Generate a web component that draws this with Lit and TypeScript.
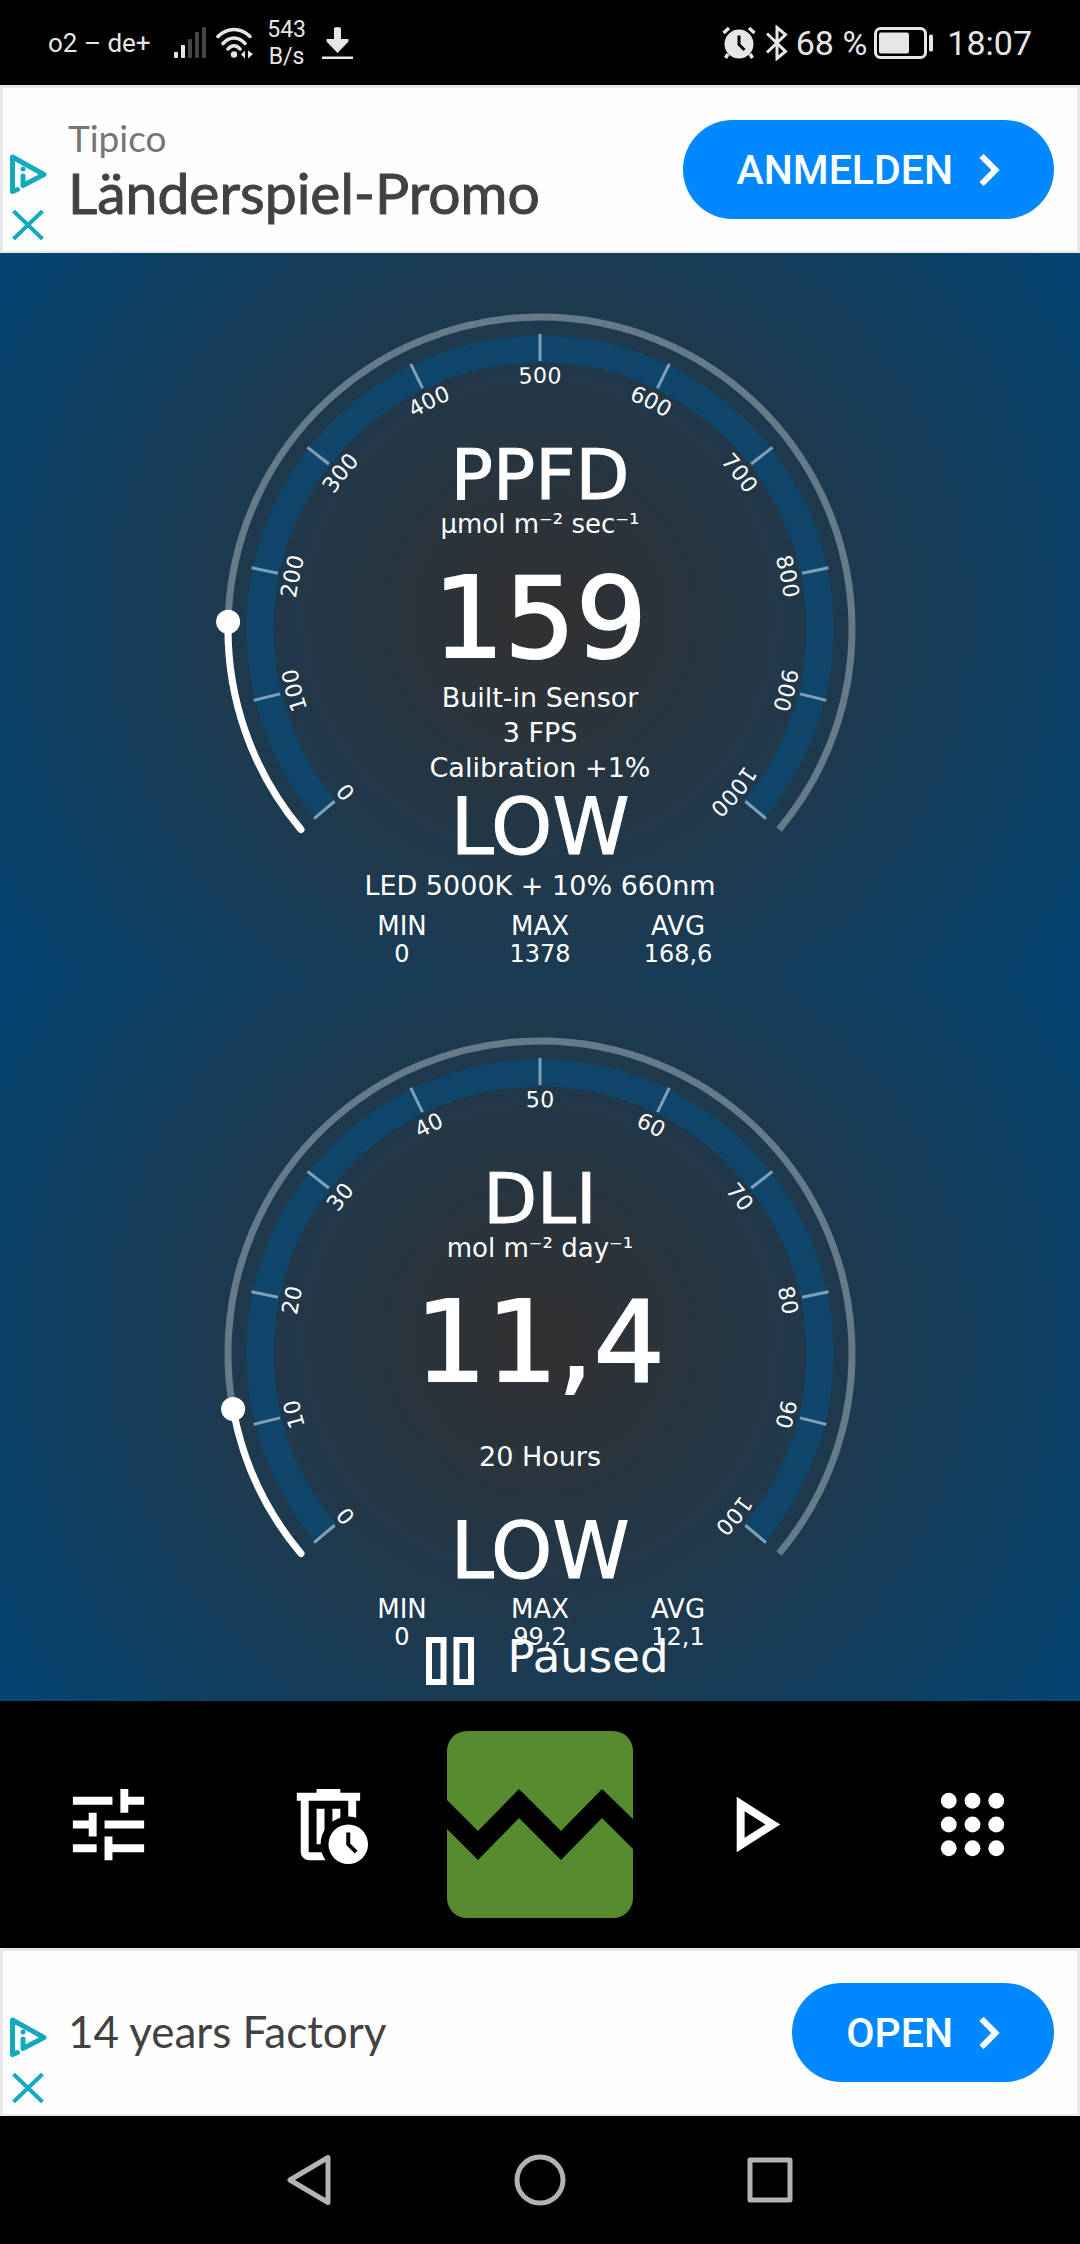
import { LitElement, html, svg, css, nothing } from "lit";
import { customElement, property } from "lit/decorators.js";

const START_ANGLE = 140;
const SWEEP = 260;
const CX = 320;
const CY = 376;

function point(radius: number, angle: number): string {
  const rad = (angle * Math.PI) / 180;
  return `${(CX + radius * Math.cos(rad)).toFixed(2)} ${(CY + radius * Math.sin(rad)).toFixed(2)}`;
}

function arc(radius: number, from: number, to: number): string {
  const large = to - from > 180 ? 1 : 0;
  return `M${point(radius, from)}A${radius} ${radius} 0 ${large} 1 ${point(radius, to)}`;
}

interface Stat {
  label: string;
  value: string;
}

@customElement("light-gauge")
export class LightGauge extends LitElement {
  @property() name = "";
  @property() unit = "";
  @property() reading = "";
  @property({ type: Number }) value = 0;
  @property({ type: Number }) max = 100;
  @property({ attribute: false }) notes: string[] = [];
  @property() level = "";
  @property() preset = "";
  @property({ attribute: false }) stats: Stat[] = [];

  static styles = css`
    :host {
      flex: 1;
      display: grid;
      justify-items: center;
      background: radial-gradient(circle at center, #323030 0, #1d3a50 320px, #05446f 620px);
      color: #fff;
      font-family: "DejaVu Sans", sans-serif;
      font-size: 26px;
      min-height: 724px;
    }
    .dial,
    .readout {
      grid-area: 1 / 1;
    }
    .dial {
      width: 640px;
      height: 620px;
      overflow: visible;
    }
    .band {
      fill: none;
      stroke: #11466b;
      stroke-width: 27;
    }
    .track {
      fill: none;
      stroke: #667b8a;
      stroke-width: 7;
    }
    .progress {
      fill: none;
      stroke: #fff;
      stroke-width: 7;
      stroke-linecap: round;
    }
    .tick {
      stroke: #7fa0ba;
      stroke-width: 3;
    }
    .knob,
    .mark {
      fill: #fff;
    }
    .mark {
      font-size: 22px;
      text-anchor: middle;
    }
    .guide {
      fill: none;
    }
    .readout {
      display: flex;
      flex-direction: column;
      align-items: center;
      padding-top: 187px;
    }
    .name,
    .unit,
    .reading,
    .note,
    .level,
    .preset {
      margin: 0;
      font-weight: 400;
    }
    .name {
      font-size: 70px;
      line-height: 70px;
      -webkit-text-stroke: 1px #fff;
    }
    .unit {
      line-height: 28px;
    }
    .reading {
      margin-top: 18px;
      font-size: 112px;
      line-height: 124px;
      -webkit-text-stroke: 2px #fff;
    }
    .notes {
      display: flex;
      flex-direction: column;
      justify-content: center;
      align-items: center;
      height: 105px;
    }
    .note {
      font-size: 27px;
      line-height: 35px;
    }
    .level {
      font-size: 78px;
      line-height: 84px;
      -webkit-text-stroke: 1px #fff;
    }
    .preset {
      font-size: 27px;
      line-height: 34px;
      margin-bottom: 7px;
    }
    .stats {
      display: grid;
      grid-template-columns: repeat(3, 138px);
      margin: 2px 0 0;
      text-align: center;
      line-height: 28px;
    }
    .stat-value {
      margin: 0;
      font-size: 24px;
    }
  `;

  render() {
    const marks = Array.from({ length: 11 }, (_, i) => ({
      angle: START_ANGLE + (SWEEP * i) / 10,
      text: String((this.max * i) / 10),
    }));
    const current = START_ANGLE + (SWEEP * this.value) / this.max;
    const [kx, ky] = point(312, current).split(" ");
    return html`
      <svg class="dial" viewBox="0 0 640 620" aria-hidden="true">
        <path class="guide" id="guide" d=${arc(246, 200, 340)} />
        <path class="band" d=${arc(280, START_ANGLE, START_ANGLE + SWEEP)} />
        <path class="track" d=${arc(312, START_ANGLE, START_ANGLE + SWEEP)} />
        ${marks.map(
          (m) => svg`<g transform=${`rotate(${m.angle + 90} ${CX} ${CY})`}>
            <line class="tick" x1=${CX} x2=${CX} y1=${CY - 295} y2=${CY - 268} />
            <text class="mark"><textPath href="#guide" startOffset="50%">${m.text}</textPath></text>
          </g>`
        )}
        <path class="progress" d=${arc(312, START_ANGLE, current)} />
        <circle class="knob" cx=${kx} cy=${ky} r="12" />
      </svg>
      <div class="readout">
        <h2 class="name">${this.name}</h2>
        <p class="unit">${this.unit}</p>
        <p class="reading">${this.reading}</p>
        <div class="notes">${this.notes.map((n) => html`<p class="note">${n}</p>`)}</div>
        <p class="level">${this.level}</p>
        ${this.preset ? html`<p class="preset">${this.preset}</p>` : nothing}
        <dl class="stats">
          ${this.stats.map(
            (s) => html`<div>
              <dt>${s.label}</dt>
              <dd class="stat-value">${s.value}</dd>
            </div>`
          )}
        </dl>
      </div>
    `;
  }
}

@customElement("ad-banner")
export class AdBanner extends LitElement {
  @property() advertiser = "";
  @property() headline = "";
  @property() action = "";

  static styles = css`
    :host {
      display: flex;
      align-items: center;
      box-sizing: border-box;
      height: 168px;
      padding-right: 23px;
      border: 3px solid #e6e8ea;
      border-bottom-width: 2px;
      background: #fefefe;
      font-family: Lato, "Open Sans", sans-serif;
      color: #424244;
    }
    .controls {
      align-self: flex-end;
      display: flex;
      flex-direction: column;
      align-items: center;
      gap: 16px;
      padding: 0 21px 11px 6px;
    }
    .control {
      display: block;
      padding: 0;
      border: 0;
      background: none;
      line-height: 0;
    }
    .copy {
      flex: 1;
      padding-bottom: 4px;
    }
    .advertiser,
    .headline {
      margin: 0;
      font-weight: 400;
    }
    .advertiser {
      color: #757575;
      font-size: 37px;
      line-height: 48px;
    }
    .headline {
      font-size: 44px;
      line-height: 52px;
    }
    .advertiser + .headline {
      font-size: 57px;
      line-height: 60px;
      -webkit-text-stroke: 1px #424244;
    }
    .action {
      display: flex;
      align-items: center;
      gap: 26px;
      height: 99px;
      padding: 0 54px;
      border-radius: 50px;
      background: #0088ff;
      color: #fff;
      font-size: 41px;
      font-weight: 500;
      font-family: Roboto, sans-serif;
      text-decoration: none;
    }
  `;

  render() {
    return html`
      <div class="controls">
        <button class="control" aria-label="Ad choices">
          <svg width="38" height="40" viewBox="0 0 38 40" fill="none" stroke="#14a9bf" stroke-width="5" stroke-linejoin="round" stroke-linecap="round">
            <path d="M8.500 35.500L3.500 37.500V3L35 20.500L14 31.500V22" />
            <circle cx="14" cy="15" r="2.500" fill="#14a9bf" stroke="none" />
          </svg>
        </button>
        <button class="control" aria-label="Close ad">
          <svg width="32" height="30" viewBox="0 0 32 30" fill="none" stroke="#14a9bf" stroke-width="4">
            <path d="M1.500 1L30.500 29M30.500 1L1.500 29" />
          </svg>
        </button>
      </div>
      <div class="copy">
        ${this.advertiser ? html`<p class="advertiser">${this.advertiser}</p>` : nothing}
        <p class="headline">${this.headline}</p>
      </div>
      <a class="action" href="#">
        ${this.action}
        <svg width="21" height="32" viewBox="0 0 21 32" fill="none" stroke="#fff" stroke-width="6" aria-hidden="true">
          <path d="M2.500 2L16.500 16L2.500 30" />
        </svg>
      </a>
    `;
  }
}

@customElement("app-root")
export class AppRoot extends LitElement {
  static styles = css`
    :host {
      display: flex;
      flex-direction: column;
      min-height: 100vh;
      background: #000;
    }
    .status {
      display: flex;
      align-items: center;
      justify-content: space-between;
      box-sizing: border-box;
      height: 85px;
      padding: 0 48px;
      color: #e6e6e6;
      font-family: Roboto, sans-serif;
    }
    .status-group {
      display: flex;
      align-items: center;
    }
    .carrier {
      font-size: 26px;
      margin-right: 22px;
    }
    .signal {
      margin-right: 9px;
    }
    .wifi {
      margin-right: 13px;
    }
    .rate {
      width: 40px;
      margin-right: 15px;
      font-size: 23px;
      line-height: 27px;
      text-align: center;
    }
    .alarm {
      margin-right: 9px;
    }
    .bluetooth {
      margin-right: 8px;
    }
    .clock {
      font-size: 34px;
    }
    .battery {
      margin: 0 13px 0 7px;
    }
    .meters {
      position: relative;
      flex: 1;
      display: flex;
      flex-direction: column;
    }
    .paused {
      position: absolute;
      inset: auto 0 16px 0;
      display: flex;
      justify-content: center;
      gap: 34px;
      padding-left: 14px;
      color: #fff;
      font-family: "DejaVu Sans", sans-serif;
      font-size: 45px;
      line-height: 40px;
    }
    .toolbar {
      display: grid;
      grid-template-columns: repeat(5, 1fr);
      place-items: center;
      height: 247px;
    }
    .tool {
      padding: 0;
      border: 0;
      background: none;
      line-height: 0;
    }
    .system {
      display: grid;
      grid-template-columns: repeat(3, 230px);
      justify-content: center;
      place-items: center;
      height: 128px;
    }
  `;

  private tool(label: string, shape: unknown) {
    return html`<button class="tool" aria-label=${label}>
      <svg width="95" height="95" viewBox="0 0 24 24" fill="#fff">${shape}</svg>
    </button>`;
  }

  private system(label: string, shape: unknown) {
    return html`<button class="tool" aria-label=${label}>
      <svg width="56" height="56" viewBox="0 0 56 56" fill="none" stroke="#b3b3b3" stroke-width="5" stroke-linejoin="round">${shape}</svg>
    </button>`;
  }

  render() {
    return html`
      <header class="status">
        <div class="status-group">
          <span class="carrier">o2 – de+</span>
          <svg class="signal" width="34" height="32" viewBox="0 0 34 32" fill="#e6e6e6">
            <rect x="1" y="25" width="4" height="6" rx="1" />
            <rect x="8" y="18" width="4" height="13" rx="1" />
            <g fill="#454545">
              <rect x="15" y="12" width="4" height="19" rx="1" />
              <rect x="22" y="5" width="4" height="26" rx="1" />
              <rect x="29" y="0" width="4" height="31" rx="1" />
            </g>
          </svg>
          <svg class="wifi" width="38" height="32" viewBox="0 0 38 32" fill="none" stroke="#e6e6e6" stroke-width="3.500" stroke-linecap="round">
            <path d="M2 9.500C11 0 25 0 34 9.500M7 16.500C13.500 9 22.500 9 29 16.500M12 22C15.500 17.500 20.500 17.500 24 22" />
            <circle cx="18" cy="27.500" r="3.200" fill="#e6e6e6" stroke="none" />
            <path d="M29 23.500V31.500L25 27.500ZM32 23.500V31.500L37 27Z" fill="#e6e6e6" stroke="none" />
          </svg>
          <span class="rate">543<br />B/s</span>
          <svg width="31" height="32" viewBox="0 0 31 32" fill="#e6e6e6">
            <path d="M12 1.500Q12 0 15.500 0T19 1.500V12H26.500V14.500L15.500 26L4.500 14.500V12H12ZM0 29.500H31V32H0Z" />
          </svg>
        </div>
        <div class="status-group">
          <svg class="alarm" width="34" height="34" viewBox="0 0 34 34" fill="none" stroke="#e6e6e6" stroke-width="4">
            <circle cx="17" cy="18" r="14.500" fill="#e6e6e6" stroke="none" />
            <path d="M1.500 7L7 2M32.500 7L27 2M6 28L3.500 32M28 28L30.500 32" stroke-width="3.500" />
            <path d="M17 9.500V18.500L22.500 24" stroke="#000" stroke-width="3" />
          </svg>
          <svg class="bluetooth" width="23" height="36" viewBox="0 0 23 36" fill="none" stroke="#e6e6e6" stroke-width="3">
            <path d="M2 8.500L20.500 26.500L12 33.500V2.500L20.500 9.500L2 27.500" />
          </svg>
          <span class="clock">68 %</span>
          <svg class="battery" width="60" height="32" viewBox="0 0 60 32">
            <rect x="1.500" y="1.500" width="50" height="29" rx="5" fill="none" stroke="#e6e6e6" stroke-width="3" />
            <rect x="5" y="5.500" width="30" height="21" rx="2" fill="#e6e6e6" />
            <rect x="55" y="7.500" width="4" height="17" rx="1.500" fill="#e6e6e6" />
          </svg>
          <span class="clock">18:07</span>
        </div>
      </header>

      <ad-banner advertiser="Tipico" headline="Länderspiel-Promo" action="ANMELDEN"></ad-banner>

      <main class="meters">
        <light-gauge
          name="PPFD"
          unit="µmol m⁻² sec⁻¹"
          reading="159"
          value="159"
          max="1000"
          level="LOW"
          preset="LED 5000K + 10% 660nm"
          .notes=${["Built-in Sensor", "3 FPS", "Calibration +1%"]}
          .stats=${[
            { label: "MIN", value: "0" },
            { label: "MAX", value: "1378" },
            { label: "AVG", value: "168,6" },
          ]}
        ></light-gauge>
        <light-gauge
          name="DLI"
          unit="mol m⁻² day⁻¹"
          reading="11,4"
          value="11.4"
          max="100"
          level="LOW"
          .notes=${["20 Hours"]}
          .stats=${[
            { label: "MIN", value: "0" },
            { label: "MAX", value: "99,2" },
            { label: "AVG", value: "12,1" },
          ]}
        ></light-gauge>
        <div class="paused" role="status">
          <svg width="48" height="48" viewBox="0 0 48 48" fill="none" stroke="#fff" stroke-width="6">
            <path d="M3 3H17.500V45H3ZM30.500 3H45V45H30.500Z" />
          </svg>
          <span>Paused</span>
        </div>
      </main>

      <nav class="toolbar" aria-label="Tools">
        ${this.tool(
          "Settings",
          svg`<path d="M3 17v2h6v-2H3M3 5v2h10V5H3M13 21v-2h8v-2h-8v-2h-2v6h2M7 9v2H3v2h4v2h2V9H7M21 13v-2H11v2h10M15 9h2V7h4V5h-4V3h-2v6Z" />`
        )}
        ${this.tool(
          "Clear history",
          svg`<path d="M10 3h6v1h5v2H5V4h5ZM6 6h2v13h5v2H8a2 2 0 0 1-2-2ZM18 6h2v8h-2ZM10 8h2v9h-2ZM14 8h2v6h-2Z" />
            <circle cx="18" cy="17" r="7" fill="#000" />
            <circle cx="18" cy="17" r="5" />
            <path d="M18 14v3l2 2" fill="none" stroke="#000" stroke-width="1" />`
        )}
        <button class="tool" aria-label="Chart">
          <svg width="186" height="187" viewBox="0 0 186 187">
            <rect width="186" height="187" rx="20" fill="#568c2f" />
            <path d="M0 69L31 100L72 58L114 100L155 58L186 88V118L155 87L114 129L72 87L31 129L0 98Z" />
          </svg>
        </button>
        ${this.tool("Resume", svg`<path d="M9 8.640L14.270 12L9 15.360V8.640M7 5V19L18 12" />`)}
        ${this.tool(
          "More",
          [6, 12, 18].map((y) => [6, 12, 18].map((x) => svg`<circle cx=${x} cy=${y} r="2" />`))
        )}
      </nav>

      <ad-banner headline="14 years Factory" action="OPEN"></ad-banner>

      <nav class="system" aria-label="System">
        ${this.system("Back", svg`<path d="M8 28L46 5.500V50.500Z" />`)}
        ${this.system("Home", svg`<circle cx="28" cy="28" r="23" />`)}
        ${this.system("Recent apps", svg`<rect x="8" y="8" width="40" height="40" />`)}
      </nav>
    `;
  }
}
